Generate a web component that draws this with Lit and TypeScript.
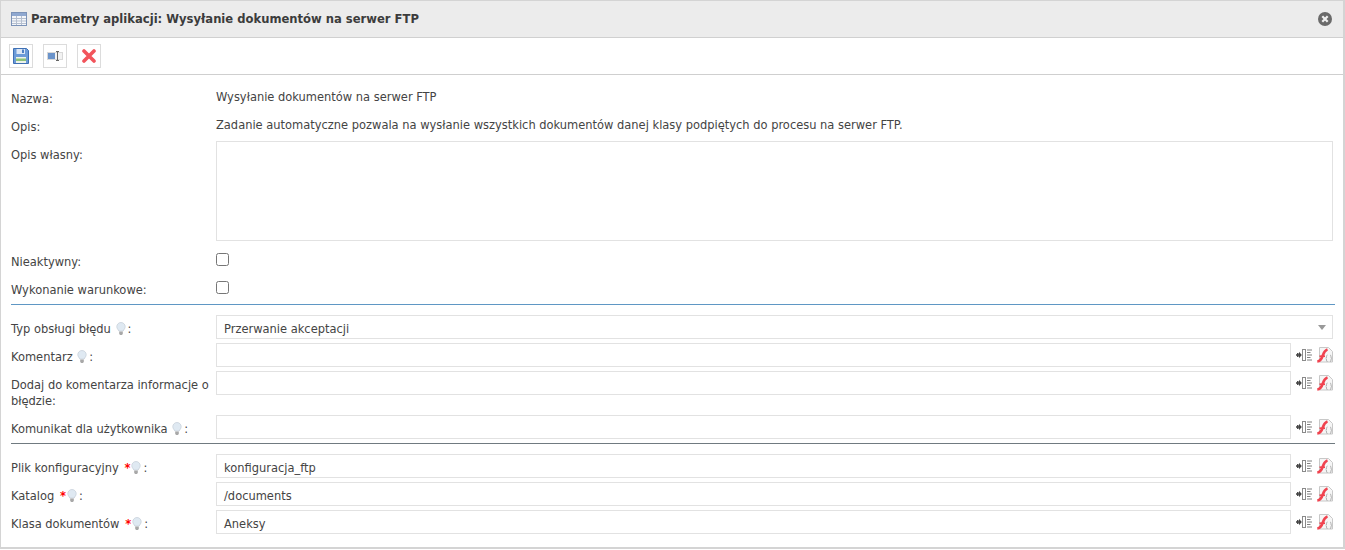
import { LitElement, html, css } from "lit";
import { customElement } from "lit/decorators.js";

const bulb = html`<svg class="bulb" width="10" height="14" viewBox="0 0 10 14"><path d="M5 .5a4.200 4.200 0 0 1 4.200 4.200c0 1.800-1.400 2.800-2 4.300H2.800c-.6-1.500-2-2.500-2-4.300A4.200 4.200 0 0 1 5 .5z" fill="#dfe9f2" stroke="#c9d2da" stroke-width=".8"/><path d="M3.200 9.500h3.600v2.600l-1 1H4.200l-1-1z" fill="#a8a8a8"/></svg>`;
const req = html`<span class="req">*</span>`;

const listIcon = html`<svg width="17" height="14" viewBox="0 0 17 14"><path d="M0 7h3.500M1.800 5v4" stroke="#444" stroke-width="1.500" fill="none"/><path d="M3 3.800 5.800 7 3 10.200z" fill="#444"/><rect x="6.500" y="1.500" width="3" height="11" fill="#fff" stroke="#8a8a8a"/><path d="M11 2h5M11 4.500h3.500M11 7h5M11 9.500h3.500M11 12h5" stroke="#808080" stroke-width="1" fill="none"/></svg>`;
const fxIcon = html`<svg width="16" height="16" viewBox="0 0 16 16"><path d="M2.500.5h9l4 4v10.500h-13z" fill="#f6f6f6" stroke="#c8c8c8"/><path d="M.3 14.500C3.500 14.200 5 11 6 8S8 3.300 10.500 2.400" fill="none" stroke="#f0434f" stroke-width="2.600"/><path d="M2.500 9.200h5.500" stroke="#f0434f" stroke-width="1.700"/><path d="M10.500 8q-1 0-1 1.700t-.7 1.700q.7 0 .7 1.700t1 1.400M13 8q1 0 1 1.700t.7 1.700q-.7 0-.7 1.700t-1 1.400" fill="none" stroke="#a8a8a8" stroke-width=".9"/></svg>`;

@customElement("app-root")
export class AppRoot extends LitElement {
  static styles = css`
    :host { display: block; width: 1345px; height: 550px; overflow: hidden; background: #fff;
      font-family: "DejaVu Sans", sans-serif; font-size: 11.46px; color: #444; box-sizing: border-box; }
    * { box-sizing: border-box; }
    .win { height: 549px; border: 2px solid #d4d4d4; border-width: 1px 2px 2px 1px; display: flex; flex-direction: column; }
    .head { height: 37px; flex: none; background: #ececec; border-bottom: 1px solid #d0d0d0; display: flex; align-items: center; padding: 0 11px 0 10px; gap: 4px; }
    .title { font-weight: bold; font-size: 11.58px; color: #3c3c3c; flex: 1; }
    .tools { height: 37px; flex: none; border-bottom: 1px solid #cfcfcf; display: flex; align-items: center; padding: 0 8px; gap: 10px; }
    .btn { width: 24px; height: 24px; border: 1px solid #dcdcdc; display: flex; align-items: center; justify-content: center; background: #fff; }
    .form { padding: 10px 0 0 10px; display: flex; flex-direction: column; gap: 4px; }
    .row { display: grid; grid-template-columns: 205px 1fr; align-items: start; }
    .label { line-height: 16px; padding: 6px 0 2px; }
    .value { line-height: 16px; padding-top: 4px; }
    .top .label { padding: 9px 0 0; height: 24px; }
    .bulb { vertical-align: -3px; margin: 0 2px 0 1px; }
    .req { color: #f00; margin-left: 2px; font-weight: bold; }
    .area { height: 100px; width: 1117px; border: 1px solid #e2e2e2; }
    .check { width: 13px; height: 13px; margin-top: 8px; border: 1px solid #767676; border-radius: 2.500px; background: #fff; }
    hr { border: 0; height: 1px; margin: 0; width: 1324px; }
    .blue { background: #5f97c4; }
    .grey { background: #707a80; }
    .input { height: 24px; border: 1px solid #e2e2e2; padding: 0 7px; line-height: 26px; color: #444; background: #fff; white-space: nowrap; overflow: hidden; }
    .select { width: 1117px; display: flex; align-items: flex-start; justify-content: space-between; padding-right: 6px; }
    .caret { width: 0; height: 0; margin-top: 9px; border: 4.500px solid transparent; border-top: 5px solid #999; border-bottom: 0; }
    .field { display: flex; align-items: flex-start; }
    .field .input { width: 1075px; flex: none; }
    .ic { display: flex; align-items: center; height: 24px; margin-left: 5px; gap: 4px; }
    .sep { margin: 3px 0 6px; }
    .sep2 { margin: 0 0 6px; }
  `;

  private field(label: unknown, value: string) {
    return html`<div class="row"><div class="label">${label}</div>
      <div class="field"><div class="input">${value}</div><div class="ic">${listIcon}${fxIcon}</div></div></div>`;
  }

  render() {
    return html`<div class="win">
      <div class="head">
        <svg width="16" height="14" viewBox="0 0 16 14"><rect x=".5" y=".5" width="15" height="13" fill="#f4f6fa" stroke="#7c93b8"/><rect x="1" y="1" width="14" height="3" fill="#8fa8d0"/><path d="M1 6.500h14M1 9h14M1 11.500h14M5.500 4v9M10.500 4v9" stroke="#b5bfcf" stroke-width="1"/></svg>
        <div class="title">Parametry aplikacji: Wysyłanie dokumentów na serwer FTP</div>
        <svg width="14" height="14" viewBox="0 0 14 14"><circle cx="7" cy="7" r="7" fill="#6a6a6a"/><path d="M4.300 4.300l5.400 5.400M9.700 4.300l-5.400 5.400" stroke="#f0f0f0" stroke-width="2.200"/></svg>
      </div>
      <div class="tools">
        <div class="btn"><svg width="16" height="16" viewBox="0 0 16 16"><path d="M.5.500h13l2 2v13H.5z" fill="#6c9bd8" stroke="#3f70b4"/><rect x="3.500" y="1" width="8.500" height="5" fill="#dce7f6"/><rect x="9" y="1.500" width="2" height="3.500" fill="#4f80c4"/><rect x="3" y="9" width="10" height="6" fill="#eef3ea"/><rect x="3" y="10.500" width="10" height="2.500" fill="#8cc27a"/></svg></div>
        <div class="btn"><svg width="16" height="10" viewBox="0 0 16 10"><rect x=".5" y="1.500" width="15" height="7" fill="#f2f2f2" stroke="#d8d8d8"/><rect x="1" y="2" width="7" height="6" fill="#6a93ca"/><path d="M9 .5h3M10.500.5v9M9 9.500h3" stroke="#666" fill="none"/></svg></div>
        <div class="btn"><svg width="14" height="14" viewBox="0 0 14 14"><path d="M2 2l10 10M12 2 2 12" stroke="#f2545b" stroke-width="3.600" stroke-linecap="round"/></svg></div>
      </div>
      <div class="form">
        <div class="row"><div class="label">Nazwa:</div><div class="value">Wysyłanie dokumentów na serwer FTP</div></div>
        <div class="row"><div class="label">Opis:</div><div class="value">Zadanie automatyczne pozwala na wysłanie wszystkich dokumentów danej klasy podpiętych do procesu na serwer FTP.</div></div>
        <div class="row"><div class="label">Opis własny:</div><div class="area"></div></div>
        <div class="row top"><div class="label">Nieaktywny:</div><div class="check"></div></div>
        <div class="row top"><div class="label">Wykonanie warunkowe:</div><div class="check"></div></div>
        <hr class="blue sep" />
        <div class="row"><div class="label">Typ obsługi błędu ${bulb}:</div><div class="input select">Przerwanie akceptacji<span class="caret"></span></div></div>
        ${this.field(html`Komentarz ${bulb}:`, "")}
        ${this.field("Dodaj do komentarza informacje o błędzie:", "")}
        ${this.field(html`Komunikat dla użytkownika ${bulb}:`, "")}
        <hr class="grey sep2" />
        ${this.field(html`Plik konfiguracyjny ${req}${bulb}:`, "konfiguracja_ftp")}
        ${this.field(html`Katalog ${req}${bulb}:`, "/documents")}
        ${this.field(html`Klasa dokumentów ${req}${bulb}:`, "Aneksy")}
      </div>
    </div>`;
  }
}
